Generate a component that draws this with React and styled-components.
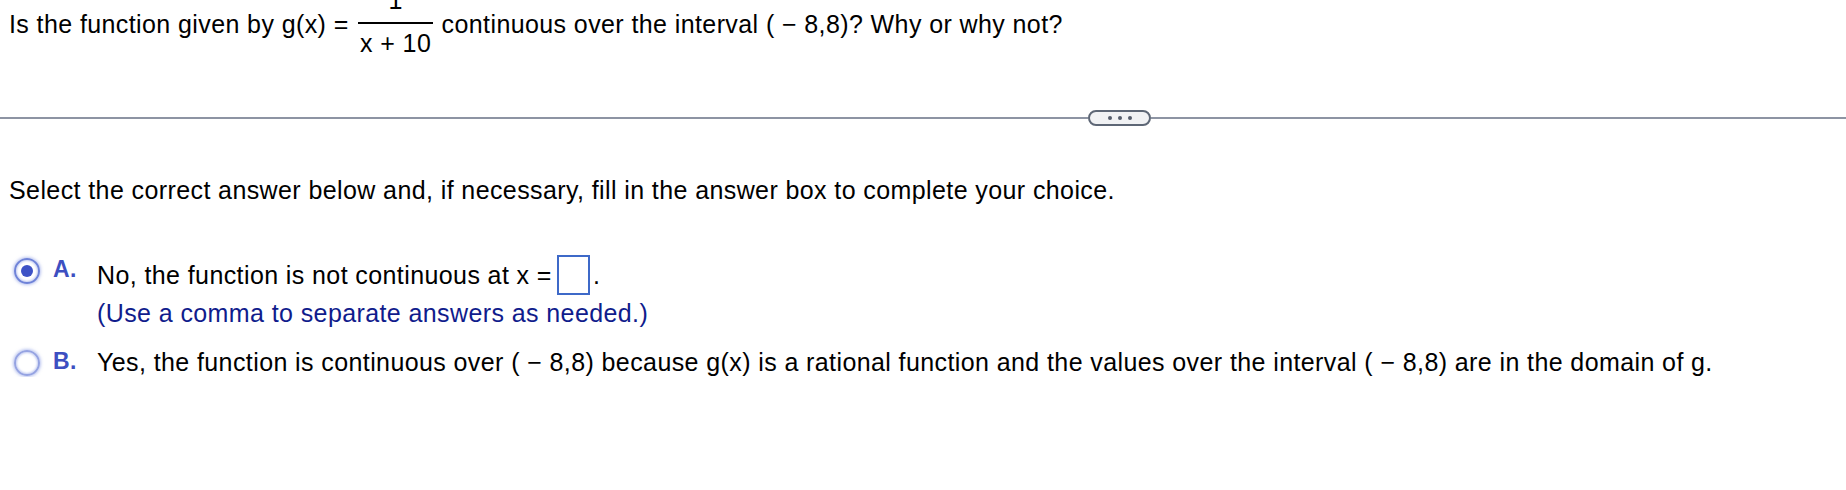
import React from 'react';
import styled, {createGlobalStyle} from 'styled-components';

const Global = createGlobalStyle`
  html, body {
    margin: 0;
    padding: 0;
    background: #fff;
  }
  body {
    font-family: "Liberation Sans", Arial, sans-serif;
    color: #000;
    overflow: hidden;
  }
`;

// page is scrolled a little, so the numerator is cut off at the top
const Page = styled.div`
  margin-top: -12px;
  font-size: 25px;
  line-height: 30px;
  letter-spacing: 0.4px;
`;

const Question = styled.div`
  padding-left: 9px;
  white-space: nowrap;
`;

const Frac = styled.span`
  display: inline-flex;
  flex-direction: column;
  align-items: center;
  vertical-align: 24px;
  margin: 0 1px 0 2px;
  line-height: 25px;
`;

const Num = styled.span`
  padding-bottom: 9px;
`;

const Bar = styled.span`
  align-self: stretch;
  height: 2px;
  background: #000;
`;

const Den = styled.span`
  padding: 7px 2px 0;
`;

const Divider = styled.div`
  display: flex;
  align-items: center;
  margin-top: 54px;
  height: 16px;
`;

const Rule = styled.div`
  height: 2px;
  background: #8d94a3;
  flex: ${p => (p.$w ? `0 0 ${p.$w}` : '1 1 auto')};
`;

const MoreButton = styled.button`
  display: flex;
  align-items: center;
  justify-content: center;
  gap: 6px;
  box-sizing: border-box;
  width: 63px;
  height: 16px;
  padding: 0;
  border: 2px solid #5e6776;
  border-radius: 9px;
  background: #f1f2f4;
`;

const Dot = styled.span`
  width: 4px;
  height: 4px;
  border-radius: 50%;
  background: #555d6b;
`;

const Instruction = styled.div`
  margin-top: 49px;
  padding-left: 9px;
`;

const Options = styled.div`
  margin-top: 50px;
  padding-left: 14px;
  display: flex;
  flex-direction: column;
  gap: 19px;
`;

const Option = styled.div`
  display: flex;
  align-items: flex-start;
`;

const Radio = styled.span`
  box-sizing: border-box;
  flex: 0 0 26px;
  height: 26px;
  margin-top: 3px;
  border-radius: 50%;
  border: 2px solid ${p => (p.$checked ? '#6f83d8' : '#95a3e2')};
  box-shadow: 0 0 3px 1px rgba(120, 140, 225, 0.5),
    inset 0 0 2px 1px rgba(120, 140, 225, 0.4);
  display: flex;
  align-items: center;
  justify-content: center;
  &::after {
    content: '';
    display: ${p => (p.$checked ? 'block' : 'none')};
    width: 12px;
    height: 12px;
    border-radius: 50%;
    background: #3d52c6;
  }
`;

const Letter = styled.span`
  flex: 0 0 44px;
  margin-left: 13px;
  padding-top: 2px;
  font-size: 23px;
  line-height: 25px;
  font-weight: bold;
  color: #3d4fc1;
  letter-spacing: 0.5px;
`;

const Body = styled.div`
  display: flex;
  flex-direction: column;
  white-space: nowrap;
`;

const AnswerBox = styled.span`
  display: inline-block;
  box-sizing: border-box;
  width: 33px;
  height: 40px;
  margin: 0 3px 0 5px;
  vertical-align: -11px;
  border: 2px solid #3e69c8;
`;

const Hint = styled.div`
  margin-top: 3px;
  color: #101c8c;
`;

export default function App() {
  return (
    <Page>
      <Global />
      <Question>
        Is the function given by g(x) ={' '}
        <Frac>
          <Num>1</Num>
          <Bar />
          <Den>x + 10</Den>
        </Frac>{' '}
        continuous over the interval ( − 8,8)? Why or why not?
      </Question>

      <Divider>
        <Rule $w="1088px" />
        <MoreButton aria-label="more">
          <Dot />
          <Dot />
          <Dot />
        </MoreButton>
        <Rule />
      </Divider>

      <Instruction>
        Select the correct answer below and, if necessary, fill in the answer box to complete your choice.
      </Instruction>

      <Options>
        <Option>
          <Radio $checked />
          <Letter>A.</Letter>
          <Body>
            <div>
              No, the function is not continuous at x =
              <AnswerBox />.
            </div>
            <Hint>(Use a comma to separate answers as needed.)</Hint>
          </Body>
        </Option>
        <Option>
          <Radio />
          <Letter>B.</Letter>
          <Body>
            <div>
              Yes, the function is continuous over ( − 8,8) because g(x) is a rational function and the values over the
              interval ( − 8,8) are in the domain of g.
            </div>
          </Body>
        </Option>
      </Options>
    </Page>
  );
}
